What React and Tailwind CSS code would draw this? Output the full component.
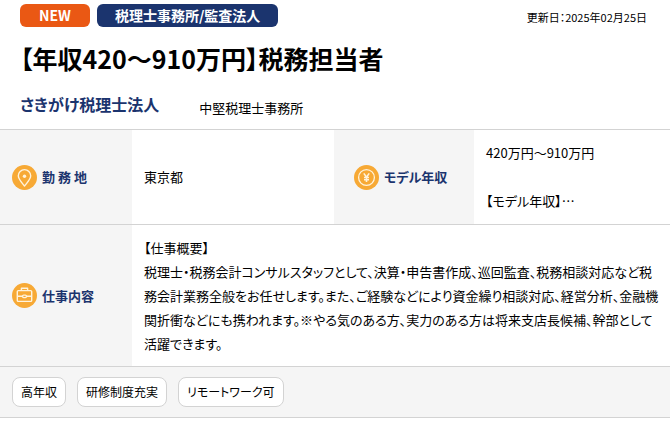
import React from "react";

const tags = ["高年収", "研修制度充実", "リモートワーク可"];

function LocationIcon() {
  return (
    <svg viewBox="0 0 25 25" className="w-[25px] h-[25px] shrink-0" fill="none" aria-hidden="true">
      <circle cx="12.5" cy="12.5" r="12.5" fill="#f7a935" />
      <path
        d="M12.5 21C9.5 17.2 6.3 14.2 6.3 10.8a6.2 6.2 0 0 1 12.4 0c0 3.4-3.2 6.4-6.2 10.2z"
        stroke="#fff3dc"
        strokeWidth="1.4"
        strokeLinejoin="round"
      />
      <circle cx="12.5" cy="11.3" r="1.7" fill="#fff3dc" />
    </svg>
  );
}

function YenIcon() {
  return (
    <svg viewBox="0 0 25 25" className="w-[25px] h-[25px] shrink-0" fill="none" aria-hidden="true">
      <circle cx="12.5" cy="12.5" r="12.5" fill="#f7a935" />
      <circle cx="12.5" cy="12.5" r="7.9" stroke="#fff3dc" strokeWidth="1.3" />
      <path
        d="M9.8 8.4l2.7 3.7 2.7-3.7M12.5 12.1v5M10 12.5h5M10 14.7h5"
        stroke="#fff3dc"
        strokeWidth="1.6"
      />
    </svg>
  );
}

function BriefcaseIcon() {
  return (
    <svg viewBox="0 0 25 25" className="w-[25px] h-[25px] shrink-0" fill="none" aria-hidden="true">
      <circle cx="12.5" cy="12.5" r="12.5" fill="#f7a935" />
      <g stroke="#fff3dc" strokeWidth="1.4" strokeLinejoin="round">
        <rect x="5.3" y="7.6" width="14.4" height="10.8" rx="1" />
        <path d="M9.4 7.4V5.2h6.2v2.2M5.5 13.3h5M14.5 13.3h5" />
        <rect x="10.6" y="12.1" width="3.8" height="2.5" rx="1" />
      </g>
    </svg>
  );
}

function Label({ icon, children }) {
  return (
    <span className="flex items-center gap-[5px] text-[13px] leading-6 font-bold text-[#1b346e]">
      {icon}
      {children}
    </span>
  );
}

function App() {
  return (
    <article
      lang="ja"
      className="bg-white text-black font-['Noto_Sans_CJK_JP',sans-serif] [font-feature-settings:'palt']"
    >
      {/* HEADER */}
      <header className="px-5 pt-1">
        <div className="flex items-start justify-between">
          <div className="flex gap-[7px] text-[14px] leading-[23px] font-bold text-white">
            <span className="px-[19px] rounded-md bg-[#ea5814]">NEW</span>
            <span className="px-[18px] rounded-md bg-[#1b346e]">
              税理士事務所/監査法人
            </span>
          </div>
          <p className="pt-[1px] pr-[3px] text-[11px] leading-6">
            更新日：2025年02月25日
          </p>
        </div>
        <h1 className="mt-[11px] text-[25px] leading-9 font-bold">
          【年収420～910万円】税務担当者
        </h1>
        <div className="flex items-end gap-10 mt-3 pb-[9px]">
          <h2 className="text-base leading-8 font-bold text-[#1b346e]">
            さきがけ税理士法人
          </h2>
          <p className="text-[13px] leading-6">中堅税理士事務所</p>
        </div>
      </header>

      {/* DETAILS */}
      <table className="w-full table-fixed border-collapse text-left text-[13px] leading-6">
        <colgroup>
          <col className="w-[132px]" />
          <col />
          <col className="w-[140px]" />
          <col className="w-[196px]" />
        </colgroup>
        <tbody>
          <tr className="border-t border-[#d3d3d3]">
            <th scope="row" className="pl-3 bg-[#f5f5f5]">
              <Label icon={<LocationIcon />}>勤 務 地</Label>
            </th>
            <td className="px-3 py-[11px]">東京都</td>
            <th scope="row" className="pl-5 bg-[#f5f5f5]">
              <Label icon={<YenIcon />}>モデル年収</Label>
            </th>
            <td className="px-3 py-[11px]">
              420万円～910万円
              <br />
              <br />
              【モデル年収】…
            </td>
          </tr>
          <tr className="border-t border-[#d3d3d3]">
            <th scope="row" className="pl-3 bg-[#f5f5f5]">
              <Label icon={<BriefcaseIcon />}>仕事内容</Label>
            </th>
            <td colSpan={3} className="pl-3 pr-2 pt-[11px] pb-[10px]">
              【仕事概要】
              <br />
              税理士・税務会計コンサルスタッフとして、決算・申告書作成、巡回監査、税務相談対応など税務会計業務全般をお任せします。また、ご経験などにより資金繰り相談対応、経営分析、金融機関折衝などにも携われます。※やる気のある方、実力のある方は将来支店長候補、幹部として活躍できます。
            </td>
          </tr>
        </tbody>
      </table>

      {/* TAGS */}
      <ul className="flex flex-wrap gap-[11px] px-3 py-[10px] border-y border-[#d3d3d3] bg-[#f5f5f5]">
        {tags.map((tag) => (
          <li
            key={tag}
            className="px-2 rounded-lg border border-[#d3d3d3] bg-white text-[12px] leading-7"
          >
            {tag}
          </li>
        ))}
      </ul>
    </article>
  );
}

export default App;
